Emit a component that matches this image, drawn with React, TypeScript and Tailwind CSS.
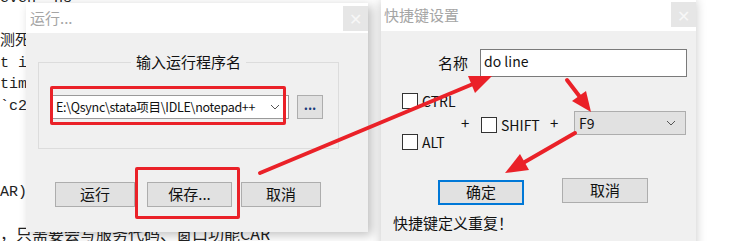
const ui = { fontFamily: '"Noto Sans CJK SC", "Noto Sans", sans-serif' };

const CodeBehind = () => {
  const lines = ["even  ns", "", "测死", "t i", "tim", "`c2", "", "", "", "AR)", ""];
  return (
    <div
      className="text-[15px] leading-[21.5px] text-[#222] whitespace-pre"
      style={{ fontFamily: '"Liberation Mono", "Noto Sans CJK SC", monospace', marginTop: -12 }}
    >
      {lines.map((l, i) => (
        <div key={i} className="h-[21.5px]">
          {l}
        </div>
      ))}
      <div className="-mt-[2px] text-[16px]" style={{ fontFamily: '"Noto Sans CJK SC", sans-serif' }}>
        ，只需要会写服务代码、窗口功能CAR
      </div>
    </div>
  );
};

const WinButton = ({ label, className = "" }: { label: string; className?: string }) => (
  <div
    className={
      "flex items-center justify-center bg-[#e1e1e1] border border-[#adadad] text-[15px] text-[#111] " + className
    }
  >
    {label}
  </div>
);

const CloseBtn = () => (
  <div className="w-[25px] h-[25px] bg-[#e6e6e6] flex items-center justify-center text-[#f7f7f7] text-[16px]">
    ✕
  </div>
);

const RunDialog = () => (
  <div className="absolute left-[26px] top-[3px] w-[342px] h-[229px] bg-[#f0f0f0] shadow-[4px_3px_10px_rgba(0,0,0,0.25)]" style={ui}>
    <div className="h-[30px] bg-white flex items-center justify-between pl-[4px]">
      <span className="text-[15px] text-[#a5a5a5]">运行...</span>
      <CloseBtn />
    </div>
    <div className="relative ml-[12px] mt-[29px] w-[301px] h-[87px] border border-[#dcdcdc]">
      <div className="absolute left-0 right-0 -top-[12px] flex justify-center">
        <span className="bg-[#f0f0f0] px-[5px] text-[15px] leading-[22px] text-[#111]">输入运行程序名</span>
      </div>
      <div className="flex items-center gap-[8px] ml-[13px] mt-[32px]">
        <div className="w-[237px] h-[24px] bg-white border border-[#9a9a9a] flex items-center justify-between pl-[3px] pr-[6px] overflow-hidden">
          <span className="text-[12.5px] tracking-[-0.3px] text-[#111] whitespace-nowrap">E:\Qsync\stata项目\IDLE\notepad++</span>
          <svg width="10" height="6" viewBox="0 0 10 6" className="mr-[2px] shrink-0">
            <path d="M1 1 L5 5 L9 1" fill="none" stroke="#555" strokeWidth="1" />
          </svg>
        </div>
        <WinButton label="..." className="w-[26px] h-[24px] !text-[13px] font-bold !text-[#1a3a7a] pb-[4px]" />
      </div>
    </div>
    <div className="flex items-center mt-[33px] ml-[29px]">
      <WinButton label="运行" className="w-[80px] h-[25px]" />
      <WinButton label="保存..." className="w-[85px] h-[25px] ml-[12px]" />
      <WinButton label="取消" className="w-[80px] h-[25px] ml-[9px]" />
    </div>
    <div className="absolute left-[24px] top-[83px] w-[236px] h-[39px] border-[3px] border-[#ea2128] rounded-[2px]" />
    <div className="absolute left-[109px] top-[164px] w-[105px] h-[52px] border-[3px] border-[#ea2128] rounded-[2px]" />
  </div>
);

const Check = ({ label }: { label: string }) => (
  <div className="flex items-center gap-[4px] h-[16px]">
    <div className="w-[16px] h-[16px] bg-white border border-[#333] shrink-0" />
    <span className="text-[14px] leading-[16px] text-[#111]">{label}</span>
  </div>
);

const HotkeyDialog = () => (
  <div className="absolute left-[381px] top-0 w-[315px] h-[260px] bg-[#f0f0f0] shadow-[0_0_10px_rgba(0,0,0,0.22)]" style={ui}>
    <div className="h-[31px] bg-white flex items-start justify-between pl-[3px]">
      <span className="text-[15px] leading-[30px] text-[#a5a5a5]">快捷键设置</span>
      <div className="mt-[2px]">
        <CloseBtn />
      </div>
    </div>
    <div className="flex items-center mt-[18px] ml-[57px]">
      <span className="text-[15px] text-[#111]">名称</span>
      <div className="ml-[12px] w-[207px] h-[28px] bg-white border border-[#7a7a7a] flex items-start pl-[3px] pt-[1px]">
        <span className="text-[14px] text-[#111]">do line</span>
      </div>
    </div>
    <div className="flex items-start mt-[16px] ml-[21px]">
      <div className="flex flex-col gap-[25px] w-[59px]">
        <Check label="CTRL" />
        <Check label="ALT" />
      </div>
      <span className="w-[20px] mt-[22px] text-[15px] leading-[16px] text-[#111]">+</span>
      <div className="w-[69px] mt-[24px]">
        <Check label="SHIFT" />
      </div>
      <span className="w-[24px] mt-[22px] text-[15px] leading-[16px] text-[#111]">+</span>
      <div className="mt-[18px] w-[112px] h-[24px] bg-[#e1e1e1] border border-[#adadad] flex items-center justify-between pl-[4px] pr-[9px]">
        <span className="text-[14px] text-[#111]">F9</span>
        <svg width="10" height="6" viewBox="0 0 10 6">
          <path d="M1 1 L5 5 L9 1" fill="none" stroke="#555" strokeWidth="1" />
        </svg>
      </div>
    </div>
    <div className="flex items-start mt-[28px] ml-[57px]">
      <WinButton label="确定" className="w-[86px] h-[25px] mt-[2px] !border-2 !border-[#0078d7]" />
      <WinButton label="取消" className="w-[86px] h-[25px] ml-[38px]" />
    </div>
    <div className="ml-[12px] mt-[7px] text-[15px] leading-[22px] text-[#111]">快捷键定义重复！</div>
  </div>
);

const Arrows = () => (
  <svg className="absolute inset-0 pointer-events-none" width="753" height="241">
    <g stroke="#ea2128" strokeWidth="4" strokeLinecap="round" fill="#ea2128">
      <line x1="260" y1="173" x2="473" y2="84" />
      <polygon points="492,76 475,93 468,76" stroke="none" />
      <line x1="567" y1="80" x2="580" y2="97" />
      <polygon points="591,112 586,91 572,101" stroke="none" />
      <line x1="575" y1="133" x2="523" y2="163" />
      <polygon points="505,173 529,170 520,154" stroke="none" />
    </g>
  </svg>
);

export default function App() {
  return (
    <div className="relative w-[753px] h-[241px] overflow-hidden bg-white">
      <CodeBehind />
      <RunDialog />
      <HotkeyDialog />
      <Arrows />
    </div>
  );
}
